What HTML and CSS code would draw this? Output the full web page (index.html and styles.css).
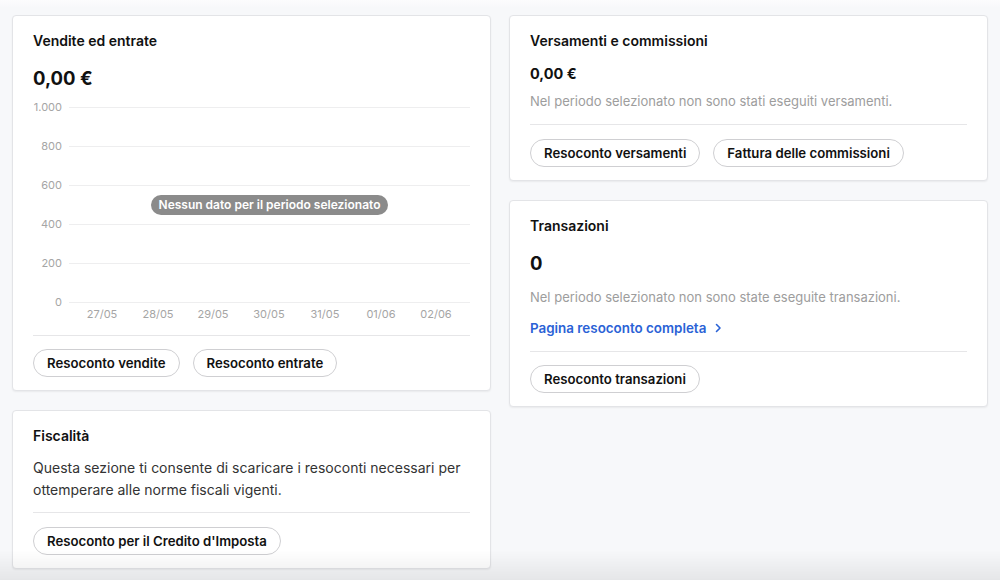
FILE: index.html
```html
<!DOCTYPE html>
<html lang="it">
<head>
    <meta charset="UTF-8">
    <title>Resoconti</title>
    <link rel="stylesheet" href="styles.css">
</head>
<body>

    <div class="page">
        <!-- Left column -->
        <div class="column">
            <div class="card card-sales">
                <h3 class="card-title">Vendite ed entrate</h3>
                <div class="amount-big">0,00 €</div>

                <div class="chart">
                    <svg width="437" height="230" viewBox="0 0 437 230">
                        <g stroke="#eeeeef" stroke-width="1">
                            <line x1="36" y1="12.5" x2="437" y2="12.5"/>
                            <line x1="36" y1="51.5" x2="437" y2="51.5"/>
                            <line x1="36" y1="90.5" x2="437" y2="90.5"/>
                            <line x1="36" y1="129.5" x2="437" y2="129.5"/>
                            <line x1="36" y1="168.5" x2="437" y2="168.5"/>
                            <line x1="36" y1="207.5" x2="437" y2="207.5"/>
                        </g>
                        <g class="axis" text-anchor="end">
                            <text x="29" y="16">1.000</text>
                            <text x="29" y="55">800</text>
                            <text x="29" y="94">600</text>
                            <text x="29" y="133">400</text>
                            <text x="29" y="172">200</text>
                            <text x="29" y="211">0</text>
                        </g>
                        <g class="axis" text-anchor="middle">
                            <text x="69" y="223">27/05</text>
                            <text x="125" y="223">28/05</text>
                            <text x="180" y="223">29/05</text>
                            <text x="236" y="223">30/05</text>
                            <text x="292" y="223">31/05</text>
                            <text x="348" y="223">01/06</text>
                            <text x="403" y="223">02/06</text>
                        </g>
                    </svg>
                    <span class="no-data">Nessun dato per il periodo selezionato</span>
                </div>

                <div class="divider divider-chart"></div>
                <div class="actions">
                    <button class="pill">Resoconto vendite</button>
                    <button class="pill">Resoconto entrate</button>
                </div>
            </div>

            <div class="card card-tax">
                <h3 class="card-title">Fiscalità</h3>
                <p class="body-text">Questa sezione ti consente di scaricare i resoconti necessari per ottemperare alle norme fiscali vigenti.</p>
                <div class="divider"></div>
                <div class="actions">
                    <button class="pill">Resoconto per il Credito d'Imposta</button>
                </div>
            </div>
        </div>

        <!-- Right column -->
        <div class="column column-right">
            <div class="card card-payouts">
                <h3 class="card-title">Versamenti e commissioni</h3>
                <div class="amount-small">0,00 €</div>
                <p class="muted">Nel periodo selezionato non sono stati eseguiti versamenti.</p>
                <div class="divider"></div>
                <div class="actions">
                    <button class="pill">Resoconto versamenti</button>
                    <button class="pill">Fattura delle commissioni</button>
                </div>
            </div>

            <div class="card card-transactions">
                <h3 class="card-title">Transazioni</h3>
                <div class="amount-big">0</div>
                <p class="muted muted-tx">Nel periodo selezionato non sono state eseguite transazioni.</p>
                <a class="link" href="#">Pagina resoconto completa
                    <svg width="8" height="10" viewBox="0 0 8 10"><path d="M2.5 1.5 L6 5 L2.5 8.5" fill="none" stroke="#2a62d6" stroke-width="1.6" stroke-linecap="round" stroke-linejoin="round"/></svg>
                </a>
                <div class="divider"></div>
                <div class="actions">
                    <button class="pill">Resoconto transazioni</button>
                </div>
            </div>
        </div>
    </div>

</body>
</html>
```

FILE: styles.css
```css
body {
    font-family: Inter, "Noto Sans", sans-serif;
    background-color: #f7f8fa;
    color: #111;
    margin: 0;
}

/* soft fade at the bottom edge of the viewport */
body::after {
    content: "";
    position: fixed;
    left: 0;
    right: 0;
    bottom: 0;
    height: 30px;
    background: linear-gradient(to bottom, rgba(0, 0, 0, 0), rgba(0, 0, 0, 0.07));
    pointer-events: none;
}

.page {
    display: grid;
    grid-template-columns: 479px 479px;
    gap: 18px;
    padding: 15px 12px;
    background: linear-gradient(to bottom, #fcfcfd 0, #f7f8fa 8px);
}

.column {
    display: flex;
    flex-direction: column;
    gap: 19px;
}

.card {
    background: #fff;
    border: 1px solid #e3e4e7;
    border-radius: 4px;
    box-shadow: 0 1px 2px rgba(0, 0, 0, 0.06);
    padding: 15px 20px 13px;
}

.card-title {
    margin: 0;
    font-size: 14px;
    line-height: 20px;
    font-weight: 600;
}

.amount-big {
    margin-top: 13px;
    font-size: 18.5px;
    line-height: 28px;
    font-weight: 700;
}

.amount-small {
    margin-top: 12px;
    font-size: 14.5px;
    line-height: 22px;
    font-weight: 700;
}

.muted {
    margin: 6px 0 0;
    font-size: 13px;
    line-height: 20px;
    color: #9d9d9d;
}

.muted-tx {
    margin-top: 10px;
}

.body-text {
    margin: 11px 0 0;
    font-size: 14px;
    line-height: 22px;
    color: #333;
}

.link {
    display: flex;
    align-items: center;
    gap: 8px;
    height: 20px;
    margin-top: 11px;
    font-size: 13.4px;
    line-height: 20px;
    font-weight: 600;
    color: #2a62d6;
    text-decoration: none;
}

/* Chart */
.chart {
    position: relative;
    margin-top: 3px;
    height: 230px;
}

.chart svg {
    display: block;
}

.axis text {
    font-family: Inter, "Noto Sans", sans-serif;
    font-size: 11px;
    fill: #a5a5a5;
}

.no-data {
    position: absolute;
    left: 118px;
    top: 100px;
    width: 237px;
    height: 20px;
    line-height: 20px;
    border-radius: 10px;
    background: #8b8b8b;
    color: #fff;
    font-size: 12px;
    font-weight: 600;
    text-align: center;
}

.divider {
    height: 1px;
    background: #e6e6e8;
    margin-top: 11px;
}

.divider-chart {
    margin-top: 10px;
}

.card-payouts .divider {
    margin-top: 13px;
}

.card-transactions .divider {
    margin-top: 13px;
}

.actions {
    display: flex;
    gap: 13px;
    margin-top: 13px;
}

.card-tax .actions,
.card-payouts .actions {
    margin-top: 14px;
}

.pill {
    height: 28px;
    padding: 0 13px;
    border: 1px solid #cfcfd2;
    border-radius: 14px;
    background: #fff;
    font-family: Inter, "Noto Sans", sans-serif;
    font-size: 13.2px;
    font-weight: 600;
    color: #111;
}
```
